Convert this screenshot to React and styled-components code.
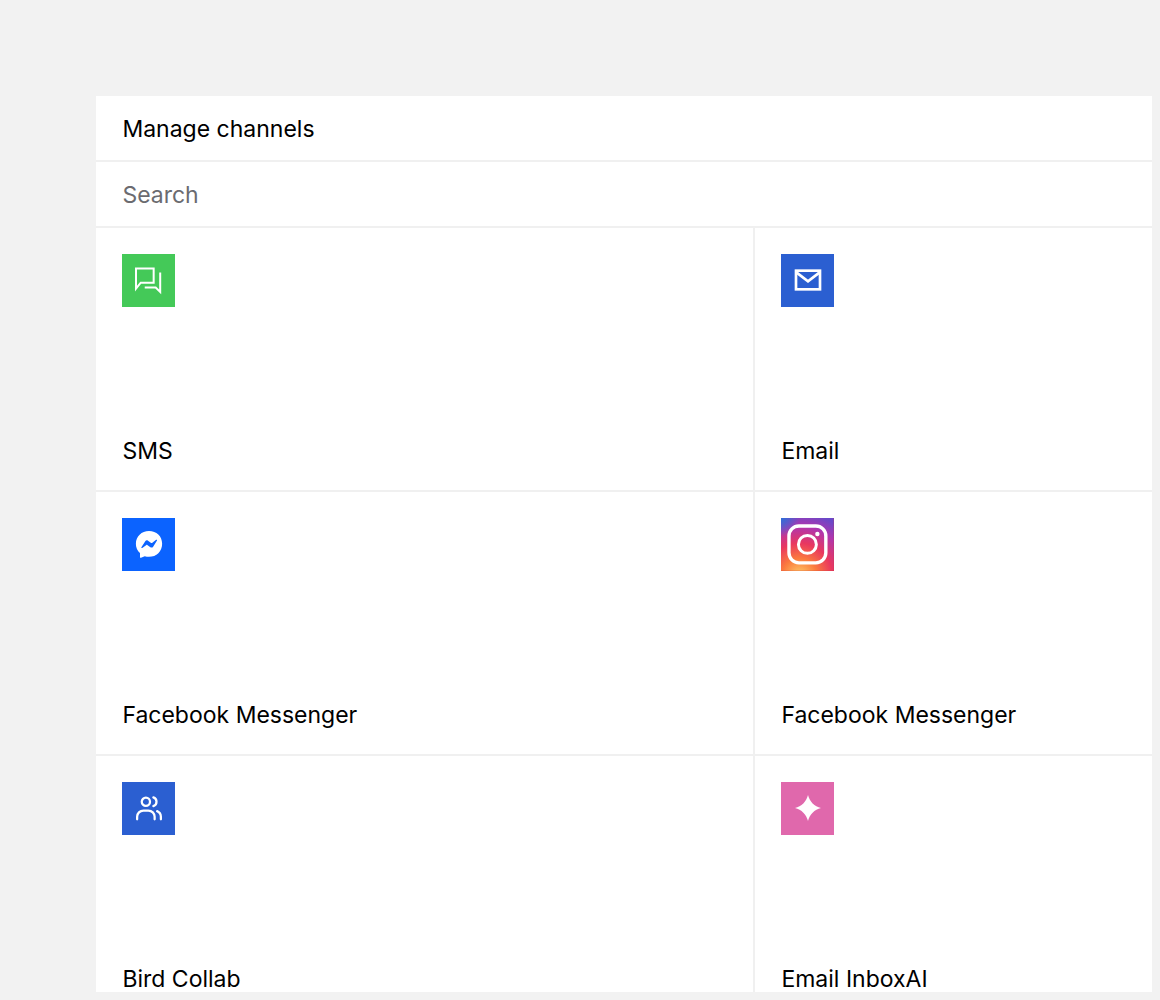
import React from "react";
import styled, { createGlobalStyle } from "styled-components";

const Global = createGlobalStyle`
  html, body { margin: 0; padding: 0; background: #f2f2f2; }
  body { font-family: Inter, "Liberation Sans", sans-serif; }
`;

const Page = styled.div`
  box-sizing: border-box;
  height: 1000px;
  padding: 96px 8px 8px 96px;
  overflow: hidden;
`;

const Panel = styled.main`
  height: 896px;
  background: #fff;
  overflow: hidden;
`;

const Bar = styled.div`
  box-sizing: border-box;
  height: 66px;
  padding: 2px 26.4px 0;
  display: flex;
  align-items: center;
  border-bottom: 2px solid #f0f0f0;
  font-size: 23px;
  color: ${(p) => (p.$muted ? "#6b6b70" : "#000")};
`;

const Grid = styled.div`
  display: grid;
  grid-template-columns: 659px 1fr;
  grid-auto-rows: 264px;
`;

const Card = styled.div`
  box-sizing: border-box;
  padding: 26px 26.4px 26px;
  display: flex;
  flex-direction: column;
  justify-content: space-between;
  border-bottom: 2px solid #f0f0f0;
  border-right: ${(p) => (p.$left ? "2px solid #f0f0f0" : "none")};
`;

const IconTile = styled.div`
  width: 52.8px;
  height: 52.8px;
  display: flex;
  align-items: center;
  justify-content: center;
  background: ${(p) => p.$bg};
`;

const Label = styled.span`
  font-size: 23px;
  line-height: 26px;
  color: #000;
`;

const Chat = () => (
  <svg width="32" height="32" viewBox="0 0 24 24" fill="none" stroke="#fff" strokeWidth="1.500">
    <path d="M2.250 18.500V3.450H15.500V14H5.800z" />
    <path d="M20.400 6.400V21L17 17.700H8.800" />
  </svg>
);
const Mail = () => (
  <svg width="32" height="32" viewBox="0 0 24 24" fill="none" stroke="#fff" strokeWidth="2">
    <rect x="3" y="5" width="18" height="14" />
    <path d="M3.500 6.500l8.500 6.500 8.500-6.500" />
  </svg>
);
const Messenger = () => (
  <svg width="30" height="30" viewBox="0 0 24 24">
    <path fill="#fff" d="M12 1.500C6 1.500 1.500 5.900 1.500 11.700c0 3 1.200 5.600 3.300 7.400v3.400c0 .4.400.7.800.5l3-1.300c1.100.3 2.200.5 3.400.5 6 0 10.500-4.400 10.500-10.500S18 1.500 12 1.500z" />
    <path fill="#0b63ff" d="M5.900 14.600l3.100-4.900c.5-.8 1.500-1 2.200-.4l2.500 1.800c.2.200.5.200.7 0l3.300-2.500c.4-.3 1 .2.700.6l-3.100 4.900c-.5.800-1.500 1-2.200.4l-2.500-1.800c-.2-.2-.5-.2-.7 0l-3.300 2.500c-.4.300-1-.2-.7-.6z" />
  </svg>
);
const Insta = () => (
  <svg width="52.8" height="52.8" viewBox="0 0 53 53" style={{ display: "block" }}>
    <defs>
      <radialGradient id="ig" cx="0.35" cy="1.1" r="1.2">
        <stop offset="0" stopColor="#fed16a" />
        <stop offset="0.28" stopColor="#fb7a3e" />
        <stop offset="0.52" stopColor="#e9375f" />
        <stop offset="0.78" stopColor="#b036ae" />
        <stop offset="1" stopColor="#6a48c8" />
      </radialGradient>
      <radialGradient id="ig2" cx="0" cy="0" r="0.35">
        <stop offset="0" stopColor="#2f6fd8" />
        <stop offset="1" stopColor="#2f6fd8" stopOpacity="0" />
      </radialGradient>
    </defs>
    <rect width="53" height="53" fill="url(#ig)" />
    <rect width="53" height="53" fill="url(#ig2)" />
    <rect x="8" y="8" width="37" height="37" rx="10" fill="none" stroke="#fff" strokeWidth="3.400" />
    <circle cx="26.500" cy="26.500" r="9" fill="none" stroke="#fff" strokeWidth="3" />
    <circle cx="36.500" cy="16" r="2.200" fill="#fff" />
  </svg>
);
const Users = () => (
  <svg width="30" height="30" viewBox="0 0 24 24" fill="none" stroke="#fff" strokeWidth="1.800" strokeLinecap="round" strokeLinejoin="round">
    <circle cx="9.500" cy="7" r="3.300" />
    <path d="M2.500 21v-2a5 5 0 0 1 5-5h4a5 5 0 0 1 5 5v2" />
    <path d="M15.500 3.500a3.700 3.700 0 0 1 0 7" />
    <path d="M21.500 21v-2a5 5 0 0 0-3-4.500" />
  </svg>
);
const Spark = () => (
  <svg width="28" height="28" viewBox="0 0 28 28">
    <path fill="#fff" d="M14 1c1.500 6.500 6.500 11.500 13 13-6.500 1.500-11.500 6.500-13 13-1.500-6.500-6.500-11.500-13-13 6.500-1.500 11.500-6.500 13-13z" />
  </svg>
);

const channels = [
  { label: "SMS", bg: "#44c958", Icon: Chat },
  { label: "Email", bg: "#2b5fd1", Icon: Mail },
  { label: "Facebook Messenger", bg: "#0b63ff", Icon: Messenger },
  { label: "Facebook Messenger", bg: "#c33", Icon: Insta },
  { label: "Bird Collab", bg: "#2b5fd1", Icon: Users },
  { label: "Email InboxAI", bg: "#e068ac", Icon: Spark },
];

export default function App() {
  return (
    <Page>
      <Global />
      <Panel>
        <Bar>Manage channels</Bar>
        <Bar $muted>Search</Bar>
        <Grid>
          {channels.map(({ label, bg, Icon }, i) => (
            <Card key={i} $left={i % 2 === 0}>
              <IconTile $bg={bg}>
                <Icon />
              </IconTile>
              <Label>{label}</Label>
            </Card>
          ))}
        </Grid>
      </Panel>
    </Page>
  );
}
